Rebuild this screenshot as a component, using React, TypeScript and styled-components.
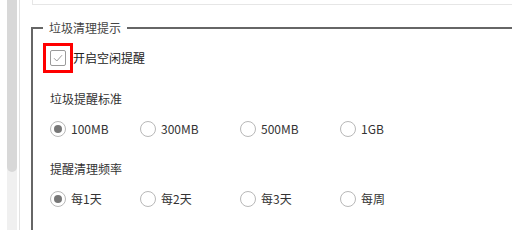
import React, { useState } from 'react';
import styled, { createGlobalStyle } from 'styled-components';

const GlobalStyle = createGlobalStyle`
  html, body {
    margin: 0;
    padding: 0;
    background: #ffffff;
    overflow: hidden;
  }
  body {
    font-family: "Noto Sans CJK SC", "Noto Sans", sans-serif;
    font-size: 12px;
    color: #333333;
  }
  * {
    box-sizing: border-box;
  }
`;

const Page = styled.div`
  display: flex;
  align-items: stretch;
  width: 512px;
  height: 230px;
  overflow: hidden;
`;

const ScrollColumn = styled.div`
  width: 20px;
  flex-shrink: 0;
  padding-left: 7px;
  border-right: 1px solid #e2e2e2;
  display: flex;
`;

const Track = styled.div`
  width: 10px;
  height: 100%;
  background: #f0f0f0;
`;

const Thumb = styled.div`
  height: 172px;
  background: #d8d8d8;
  border-radius: 0 0 5px 5px;
`;

const Content = styled.div`
  flex: 1;
  padding-left: 11px;
  display: flex;
  flex-direction: column;
  & > * {
    flex-shrink: 0;
  }
`;

const UpperPanel = styled.div`
  height: 5px;
  margin-left: 1px;
  border-left: 1px solid #e6e6e6;
  border-bottom: 1px solid #e6e6e6;
`;

const Group = styled.fieldset`
  margin: 15px 0 0 0;
  padding: 14px 17px 60px 17px;
  border: 2px solid #666666;
  border-right: none;
  display: flex;
  flex-direction: column;
  min-width: 0;
`;

const Legend = styled.legend`
  margin-left: -7px;
  padding: 0 6px;
  font-size: 12px;
  line-height: 16px;
  color: #444444;
`;

const CheckRow = styled.label`
  display: flex;
  align-items: center;
  height: 16px;
  line-height: 16px;
  color: #222222;
`;

const Highlight = styled.span`
  display: flex;
  padding: 4px;
  border: 3px solid #ff0000;
  margin: -7px 0 -7px -7px;
`;

const CheckBox = styled.span`
  width: 16px;
  height: 16px;
  border: 1px solid #9a9a9a;
  border-radius: 2px;
  background: #ffffff;
  display: flex;
  align-items: center;
  justify-content: center;
`;

const Section = styled.div<{ $top: number }>`
  margin-top: ${p => p.$top}px;
  display: flex;
  flex-direction: column;
  gap: 14px;
`;

const SectionTitle = styled.div`
  line-height: 16px;
  color: #333333;
`;

const RadioGrid = styled.div`
  display: grid;
  grid-template-columns: 90px 100px 100px 100px;
  height: 16px;
`;

const RadioItem = styled.label`
  display: flex;
  align-items: center;
  gap: 5px;
  line-height: 16px;
  color: #333333;
  cursor: pointer;
`;

const RadioCircle = styled.span<{ $checked: boolean }>`
  width: 16px;
  height: 16px;
  border-radius: 50%;
  border: 1px solid #b8b8b8;
  background: #ffffff;
  display: flex;
  align-items: center;
  justify-content: center;
  &::after {
    content: '';
    width: 8px;
    height: 8px;
    border-radius: 50%;
    background: ${p => (p.$checked ? '#777777' : 'transparent')};
  }
`;

const sizeOptions = ['100MB', '300MB', '500MB', '1GB'];
const freqOptions = ['每1天', '每2天', '每3天', '每周'];

const RadioGroup: React.FC<{ options: string[] }> = ({ options }) => {
  const [picked, setPicked] = useState(0);
  return (
    <RadioGrid>
      {options.map((o, i) => (
        <RadioItem key={o} onClick={() => setPicked(i)}>
          <RadioCircle $checked={picked === i} />
          {o}
        </RadioItem>
      ))}
    </RadioGrid>
  );
};

const App: React.FC = () => {
  return (
    <>
      <GlobalStyle />
      <Page>
        <ScrollColumn>
          <Track>
            <Thumb />
          </Track>
        </ScrollColumn>
        <Content>
          <UpperPanel />
          <Group>
            <Legend>垃圾清理提示</Legend>
            <CheckRow>
              <Highlight>
                <CheckBox>
                  <svg width="10" height="8" viewBox="0 0 10 8">
                    <path d="M1 4.2 L3.8 7 L9 1.2" fill="none" stroke="#9a9a9a" strokeWidth="1" />
                  </svg>
                </CheckBox>
              </Highlight>
              开启空闲提醒
            </CheckRow>
            <Section $top={25}>
              <SectionTitle>垃圾提醒标准</SectionTitle>
              <RadioGroup options={sizeOptions} />
            </Section>
            <Section $top={24}>
              <SectionTitle>提醒清理频率</SectionTitle>
              <RadioGroup options={freqOptions} />
            </Section>
          </Group>
        </Content>
      </Page>
    </>
  );
};

export default App;
